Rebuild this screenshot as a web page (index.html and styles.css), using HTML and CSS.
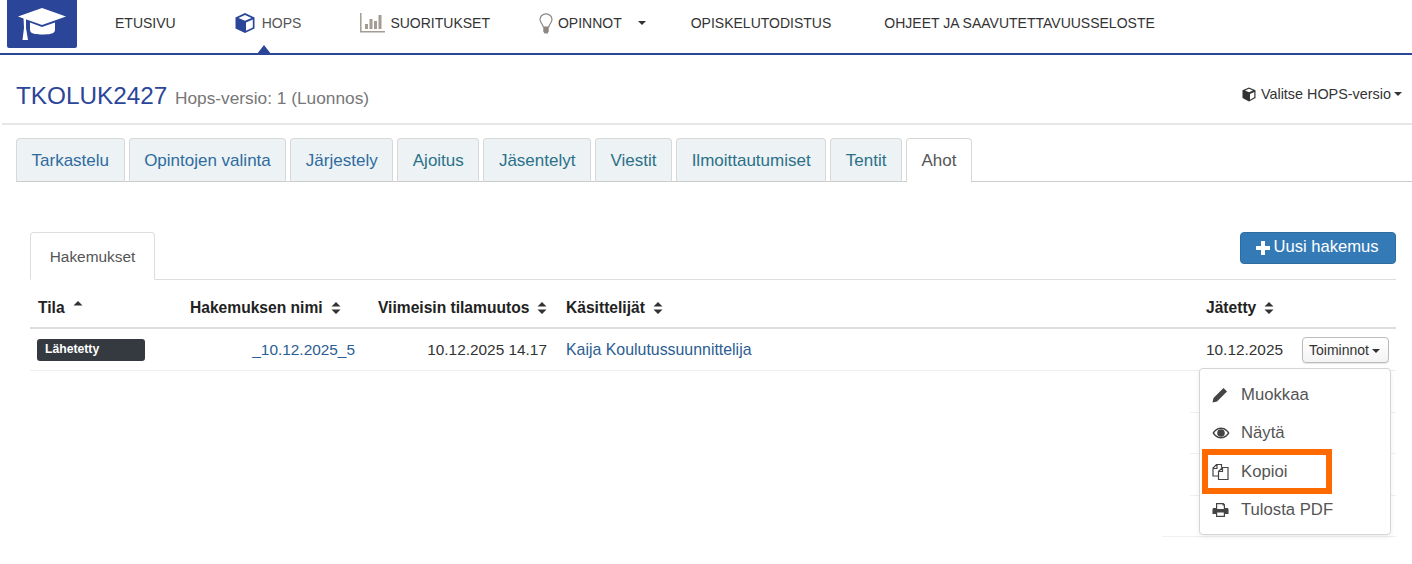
FILE: index.html
```html
<!DOCTYPE html>
<html lang="fi">
<head>
<meta charset="utf-8">
<title>HOPS</title>
<link rel="stylesheet" href="styles.css">
</head>
<body>
<header class="topbar">
  <a class="logo"><svg width="48" height="32" viewBox="0 0 48 32"><path fill="#fff" d="M24 0 L48 8.500 L24 17 L0 8.500 Z"/><path fill="#fff" d="M12 14.500 L24 19 L37 14.500 V22 C37 26 30 26.500 24.500 26.500 C19 26.500 12 26 12 22 Z"/><path fill="#fff" d="M5.500 9 L8 10 V20 L10 32 H4.500 L6 20 Z"/></svg></a>
  <nav class="nav">
    <a class="nav-item n1">ETUSIVU</a>
    <a class="nav-item n2 active"><svg width="22" height="22" viewBox="0 0 22 22"><path fill="#2b4699" d="M11 1 L20.500 5.500 V16.500 L11 21 L1.500 16.500 V5.500 Z"/><path fill="#fff" d="M11 3 L17.500 6 L11 8.800 L4.500 6 Z M12 10.500 L18.800 7.400 V15.500 L12 18.700 Z"/></svg><span class="muted">HOPS</span></a>
    <a class="nav-item n3"><svg width="25" height="20" viewBox="0 0 25 20"><path fill="none" stroke="#a49c92" stroke-width="1.500" d="M.8 0 V18.700 H25"/><path fill="#a49c92" d="M5 11 H8 V16 H5 Z M9.500 6 H12.500 V16 H9.500 Z M14 8 H17 V16 H14 Z M18.500 2 H21.500 V16 H18.500 Z"/></svg>SUORITUKSET</a>
    <a class="nav-item n4"><svg width="14" height="21" viewBox="0 0 14 21"><path fill="#fff" stroke="#8d8780" stroke-width="1.200" d="M7 .8 C3.500 .8 1 3.400 1 6.600 C1 9.500 3.500 10.500 4.300 14 H9.700 C10.500 10.500 13 9.500 13 6.600 C13 3.400 10.500 .8 7 .8 Z"/><path fill="#8d8780" d="M4.300 14 H9.700 V18.500 L8.500 20.500 H5.500 L4.300 18.500 Z"/></svg>OPINNOT<i class="caret nav-caret"></i></a>
    <a class="nav-item n5">OPISKELUTODISTUS</a>
    <a class="nav-item n6">OHJEET JA SAAVUTETTAVUUSSELOSTE</a>
  </nav>
</header>

<section class="title-row">
  <h1 class="title">TKOLUK2427 <small>Hops-versio: 1 (Luonnos)</small></h1>
  <a class="version"><svg width="14" height="15" viewBox="0 0 14 15"><path fill="#333" d="M7 .5 L13.500 3.200 V11 L7 14.500 L.5 11 V3.200 Z"/><path fill="#fff" d="M7 1.800 L11 3.500 L7 5.200 L3 3.500 Z M8 7 L12.300 5 V10.300 L8 12.700 Z"/></svg>Valitse HOPS-versio<i class="caret"></i></a>
</section>

<ul class="tabs">
  <li class="tab"><a class="t-blue">Tarkastelu</a></li>
  <li class="tab"><a class="t-blue">Opintojen valinta</a></li>
  <li class="tab"><a class="t-blue">Järjestely</a></li>
  <li class="tab"><a class="t-teal">Ajoitus</a></li>
  <li class="tab"><a class="t-teal">Jäsentelyt</a></li>
  <li class="tab"><a class="t-teal">Viestit</a></li>
  <li class="tab"><a class="t-teal">Ilmoittautumiset</a></li>
  <li class="tab"><a class="t-teal">Tentit</a></li>
  <li class="tab current"><a>Ahot</a></li>
</ul>

<main class="panel">
  <div class="sub-head">
    <div class="sub-tab">Hakemukset</div>
    <button class="primary"><svg width="14" height="14" viewBox="0 0 14 14"><path fill="#fff" d="M5 0 H9 V5 H14 V9 H9 V14 H5 V9 H0 V5 H5 Z"/></svg>Uusi hakemus</button>
  </div>
  <div class="grid head">
    <div class="th">Tila <svg class="sort" width="10" height="14" viewBox="0 0 10 14"><path fill="#333" d="M5 0 L9.500 4.500 H.5 Z"/></svg></div>
    <div class="th">Hakemuksen nimi <svg class="sort" width="10" height="14" viewBox="0 0 10 14"><path fill="#333" d="M5 1 L9.500 5.500 H.5 Z M5 13 L9.500 8.500 H.5 Z"/></svg></div>
    <div class="th">Viimeisin tilamuutos <svg class="sort" width="10" height="14" viewBox="0 0 10 14"><path fill="#333" d="M5 1 L9.500 5.500 H.5 Z M5 13 L9.500 8.500 H.5 Z"/></svg></div>
    <div class="th">Käsittelijät <svg class="sort" width="10" height="14" viewBox="0 0 10 14"><path fill="#333" d="M5 1 L9.500 5.500 H.5 Z M5 13 L9.500 8.500 H.5 Z"/></svg></div>
    <div class="th">Jätetty <svg class="sort" width="10" height="14" viewBox="0 0 10 14"><path fill="#333" d="M5 1 L9.500 5.500 H.5 Z M5 13 L9.500 8.500 H.5 Z"/></svg></div>
    <div></div>
  </div>
  <div class="grid row">
    <div><span class="badge">Lähetetty</span></div>
    <div class="right name"><a class="link">_10.12.2025_5</a></div>
    <div class="right change">10.12.2025 14.17</div>
    <div class="handler"><a class="link">Kaija Koulutussuunnittelija</a></div>
    <div>10.12.2025</div>
    <div><button class="small">Toiminnot<i class="caret"></i></button></div>
  </div>
  <div class="ghost g1"></div>
  <div class="ghost g2"></div>
  <div class="ghost g3"></div>
  <div class="ghost g4"></div>

  <ul class="menu">
    <li><svg width="16" height="16" viewBox="0 0 16 16"><path fill="#444" d="M11.500 1 L15 4.500 L5 14.500 L.5 15.500 L1.500 11 Z"/></svg>Muokkaa</li>
    <li><svg width="18" height="14" viewBox="0 0 18 14"><path fill="#444" fill-rule="evenodd" d="M9 1.500 C13.500 1.500 16.500 5 17.500 7 C16.500 9 13.500 12.500 9 12.500 C4.500 12.500 1.500 9 .5 7 C1.500 5 4.500 1.500 9 1.500 Z M9 3 C6 3 3.500 4.800 2.200 7 C3.500 9.200 6 11 9 11 C12 11 14.500 9.200 15.800 7 C14.500 4.800 12 3 9 3 Z"/><circle fill="#444" cx="9" cy="7" r="3.800"/></svg>Näytä</li>
    <li><svg width="17" height="17" viewBox="0 0 17 17"><path fill="none" stroke="#444" stroke-width="1.200" d="M9.500 4 V1 H4.500 L1 4.500 V12.500 H6 M5 1 V5 H1 M6.500 8 L10.500 4 H16 V16 H6.500 Z M10.500 4 V8 H6.500"/></svg>Kopioi</li>
    <li><svg width="17" height="16" viewBox="0 0 17 16"><path fill="#444" fill-rule="evenodd" d="M4 1 H11.500 L13 2.500 V6 H15 C16 6 16.500 6.700 16.500 7.500 V12 H13 V15 H4 V12 H.5 V7.500 C.5 6.700 1 6 2 6 H4 Z M5.200 2.200 V7 H11.800 V3.500 H10.500 V2.200 Z M5.200 10.500 V13.800 H11.800 V10.500 Z"/></svg>Tulosta PDF</li>
  </ul>
  <div class="highlight"></div>
</main>
</body>
</html>
```
FILE: styles.css
```css
* { box-sizing: border-box; }
html, body { margin: 0; padding: 0; }
body {
  width: 1412px;
  height: 564px;
  overflow: hidden;
  background: #fff;
  font-family: "Liberation Sans", Arial, sans-serif;
  color: #333;
  position: relative;
}
.topbar {
  height: 55px;
  border-bottom: 2px solid #2b4699;
  display: flex;
  align-items: flex-start;
  padding-left: 7px;
}
.logo {
  width: 70px;
  height: 48px;
  background: #2b4699;
  border-radius: 0 0 2px 2px;
  display: flex;
  align-items: flex-start;
  padding: 8px 0 0 11px;
}
.nav { display: flex; height: 46px; align-items: center; font-size: 14px; color: #333; }
.nav-item { display: flex; align-items: center; position: relative; white-space: nowrap; }
.n1 { margin-left: 38px; }
.n2 { margin-left: 58px; }
.n2 svg { margin-right: 6px; }
.n3 { margin-left: 59px; }
.n3 svg { margin-right: 5px; }
.n4 { margin-left: 49px; }
.n4 svg { margin-right: 5px; }
.n5 { margin-left: 45px; }
.n6 { margin-left: 53px; }
.muted { color: #555; }
.active::after {
  content: "";
  position: absolute;
  left: 23px;
  top: 33px;
  border-left: 7px solid transparent;
  border-right: 7px solid transparent;
  border-bottom: 9px solid #2b4699;
}
.caret {
  display: inline-block;
  width: 0;
  height: 0;
  margin-left: 3px;
  vertical-align: middle;
  border-top: 4px solid #333;
  border-left: 4px solid transparent;
  border-right: 4px solid transparent;
}
.nav-caret { margin-left: 16px; }

.title-row {
  height: 70px;
  margin-left: 2px;
  padding: 25px 10px 0 14px;
  display: flex;
  justify-content: space-between;
  border-bottom: 2px solid #e4e6e7;
}
.title { margin: 0; font-size: 24.300px; font-weight: 400; color: #2b4699; line-height: 32px; }
.title small { font-size: 17.300px; color: #777; margin-left: 1px; }
.version { font-size: 14.400px; display: flex; align-items: center; height: 28px; color: #333; }
.version svg { margin-right: 5px; }

.tabs {
  list-style: none;
  margin: 13px 0 0 16px;
  padding: 0;
  display: flex;
  gap: 4px;
  height: 44px;
  border-bottom: 1px solid #ccc;
}
.tab {
  height: 44px;
  padding: 0 14.550px;
  font-size: 17px;
  line-height: 44px;
  background: #edf2f4;
  border: 1px solid #d8d8d8;
  border-bottom-color: #ccc;
  border-radius: 4px 4px 0 0;
  white-space: nowrap;
}
.t-blue { color: #2f6b9f; }
.t-teal { color: #2a7189; }
.current {
  background: #fff;
  color: #555;
  border-bottom-color: #fff;
  height: 45px;
}

.panel { position: relative; padding: 50px 16px 0 30px; }
.sub-head {
  height: 48px;
  display: flex;
  justify-content: space-between;
  align-items: flex-start;
  border-bottom: 1px solid #ddd;
}
.sub-tab {
  width: 125px;
  height: 48px;
  background: #fff;
  border: 1px solid #ddd;
  border-bottom-color: #fff;
  border-radius: 4px 4px 0 0;
  font-size: 15.400px;
  color: #555;
  text-align: center;
  line-height: 48px;
}
.primary {
  width: 156px;
  height: 32px;
  background: #337ab7;
  border: 1px solid #2e6da4;
  border-radius: 4px;
  color: #fff;
  font: 16.600px "Liberation Sans", Arial, sans-serif;
  display: flex;
  align-items: center;
  justify-content: center;
  gap: 3px;
  padding: 0 1px 2px 0;
}
.primary svg { margin-top: 1px; }
.grid {
  display: grid;
  grid-template-columns: 152px 188px 188px 640px 96px 1fr;
  align-items: center;
  padding-left: 8px;
}
.head {
  height: 49px;
  padding-top: 8px;
  border-bottom: 2px solid #ddd;
  font-size: 15.600px;
  font-weight: 700;
  color: #222;
}
.th { display: flex; align-items: center; gap: 8px; white-space: nowrap; }
.sort { flex: none; }
.row {
  height: 42px;
  border-bottom: 1px solid #eee;
  font-size: 15.400px;
  color: #333;
}
.row > div { white-space: nowrap; }
.right { text-align: right; }
.name { padding-right: 23px; }
.change { padding-right: 19px; }
.handler { font-size: 15.900px; }
.link { color: #2a5d93; }
.badge {
  display: block;
  width: 108px;
  height: 22px;
  margin-left: -1px;
  padding-left: 8px;
  line-height: 21px;
  background: #343a40;
  border-radius: 3px;
  color: #fff;
  font-size: 12.200px;
  font-weight: 700;
}
.small {
  height: 26px;
  width: 87px;
  padding: 0 2px 0 0;
  background: linear-gradient(#fff, #f4f4f4);
  border: 1px solid #bbb;
  border-radius: 4px;
  font: 14px "Liberation Sans", Arial, sans-serif;
  color: #333;
  box-shadow: 0 1px 1px rgba(0,0,0,.1);
}
.ghost { height: 1px; background: #f0f0f0; margin-left: auto; width: 206px; }
.g1, .g3 { margin-top: 41px; }
.g2, .g4 { margin-top: 40px; }
.g4 { width: 234px; }
.menu {
  position: absolute;
  left: 1199px;
  top: 186px;
  width: 192px;
  height: 167px;
  margin: 0;
  padding: 7px 0;
  list-style: none;
  background: #fff;
  border: 1px solid #d5d5d5;
  border-radius: 4px;
  box-shadow: 0 2px 5px rgba(0,0,0,.07);
  font-size: 16.700px;
  color: #555;
}
.menu li {
  height: 38.300px;
  display: flex;
  align-items: center;
  position: relative;
  padding-left: 41px;
}
.menu svg { position: absolute; left: 12px; top: 50%; transform: translateY(-50%); }
.highlight {
  position: absolute;
  left: 1202px;
  top: 267px;
  width: 130px;
  height: 45px;
  border: 6px solid #ff6a00;
}
```
